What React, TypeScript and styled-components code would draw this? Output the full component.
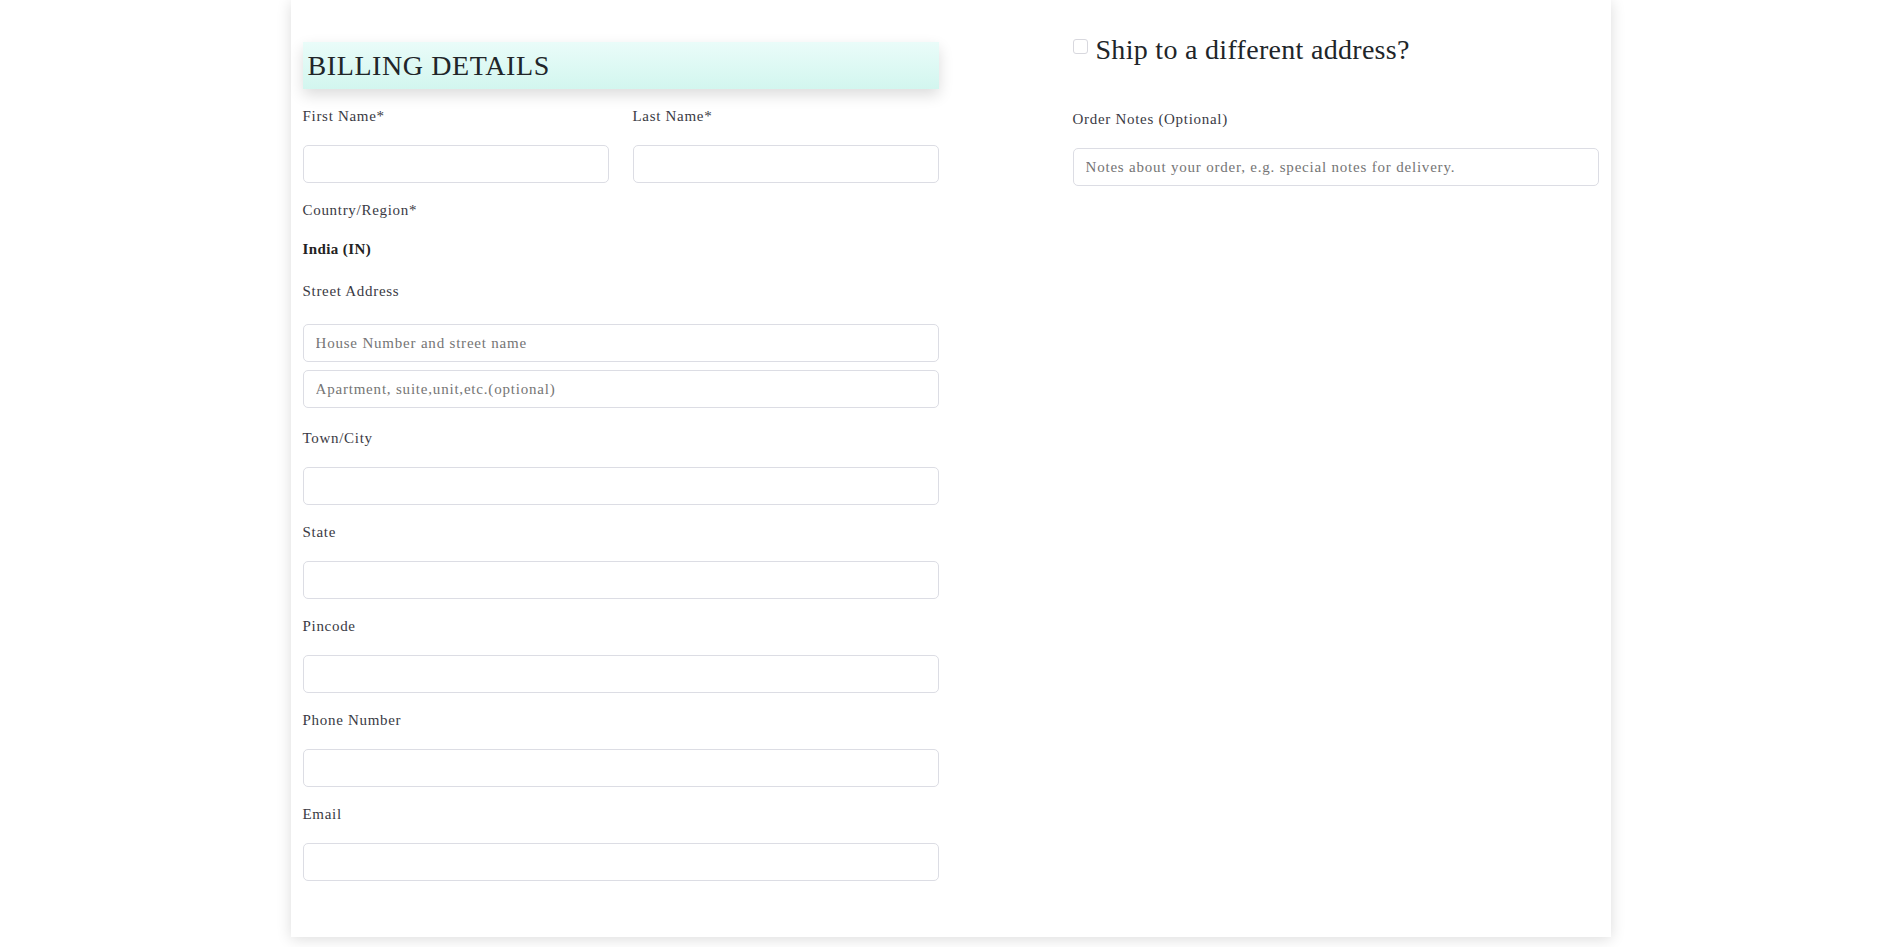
import React from 'react';
import styled, { createGlobalStyle } from 'styled-components';

const GlobalStyle = createGlobalStyle`
  body {
    margin: 0;
    background: #ffffff;
    font-family: "Liberation Serif", "DejaVu Serif", serif;
    color: #333;
  }
  * { box-sizing: border-box; }
`;

const Card = styled.div`
  width: 1320px;
  margin: 0 auto 10px;
  position: relative;
  left: 1px;
  background: #fff;
  box-shadow: 0 2px 14px rgba(0, 0, 0, 0.14);
  padding: 42px 0 40px;
  display: grid;
  grid-template-columns: 660px 110px 550px;
`;

const Column = styled.div<{ $col: number }>`
  grid-column: ${p => p.$col};
  padding: 0 12px;
`;

const SectionTitle = styled.h3`
  margin: 0 0 16px;
  height: 47px;
  padding: 0 5px;
  display: flex;
  align-items: center;
  background: linear-gradient(to bottom, #eafcf9, #d2f6ef);
  box-shadow: 0 6px 14px rgba(0, 0, 0, 0.14);
  font-family: "Liberation Serif", serif;
  font-weight: 400;
  font-size: 28px;
  letter-spacing: 0.6px;
  color: #212529;
`;

const Row = styled.div`
  display: grid;
  grid-template-columns: 1fr 1fr;
  column-gap: 24px;
`;

const Group = styled.div<{ $after?: number }>`
  margin-bottom: ${p => p.$after ?? 16}px;
`;

const Label = styled.label<{ $space?: number }>`
  display: block;
  font-size: 15px;
  line-height: 22px;
  letter-spacing: 0.7px;
  color: #3a3a44;
  margin-bottom: ${p => p.$space ?? 18}px;
`;

const Value = styled.div`
  font-size: 15px;
  line-height: 22px;
  font-weight: 700;
  letter-spacing: 0.4px;
  color: #222;
`;

const Input = styled.input`
  display: block;
  width: 100%;
  height: 38px;
  padding: 0 12px;
  border: 1px solid #dcdde4;
  border-radius: 5px;
  font-family: "Liberation Serif", serif;
  font-size: 15px;
  letter-spacing: 0.8px;
  color: #333;
  background: #fff;
  outline: none;
  & + & { margin-top: 8px; }
  &::placeholder { color: #757575; }
`;

const ShipRow = styled.label`
  display: flex;
  align-items: flex-start;
  gap: 8px;
  margin: -9px 0 41px;
  cursor: pointer;
`;

const Check = styled.span`
  width: 15px;
  height: 15px;
  margin-top: 6px;
  flex: none;
  border: 1px solid #d8d8de;
  border-radius: 3px;
  background: #fff;
`;

const ShipTitle = styled.span`
  font-size: 28px;
  line-height: 34px;
  letter-spacing: 0.3px;
  color: #212529;
`;

type FieldProps = { label: string; after?: number };

const Field = ({ label, after }: FieldProps) => (
  <Group $after={after}>
    <Label>{label}</Label>
    <Input />
  </Group>
);

export default function App() {
  return (
    <>
      <GlobalStyle />
      <Card>
        <Column $col={1}>
          <SectionTitle>BILLING DETAILS</SectionTitle>
          <Row>
            <Field label="First Name*" />
            <Field label="Last Name*" />
          </Row>
          <Group $after={20}>
            <Label $space={17}>Country/Region*</Label>
            <Value>India (IN)</Value>
          </Group>
          <Group $after={19}>
            <Label $space={22}>Street Address</Label>
            <Input placeholder="House Number and street name" />
            <Input placeholder="Apartment, suite,unit,etc.(optional)" />
          </Group>
          <Field label="Town/City" />
          <Field label="State" />
          <Field label="Pincode" />
          <Field label="Phone Number" />
          <Field label="Email" />
        </Column>
        <Column $col={3}>
          <ShipRow>
            <Check />
            <ShipTitle>Ship to a different address?</ShipTitle>
          </ShipRow>
          <Group>
            <Label>Order Notes (Optional)</Label>
            <Input placeholder="Notes about your order, e.g. special notes for delivery." />
          </Group>
        </Column>
      </Card>
    </>
  );
}
